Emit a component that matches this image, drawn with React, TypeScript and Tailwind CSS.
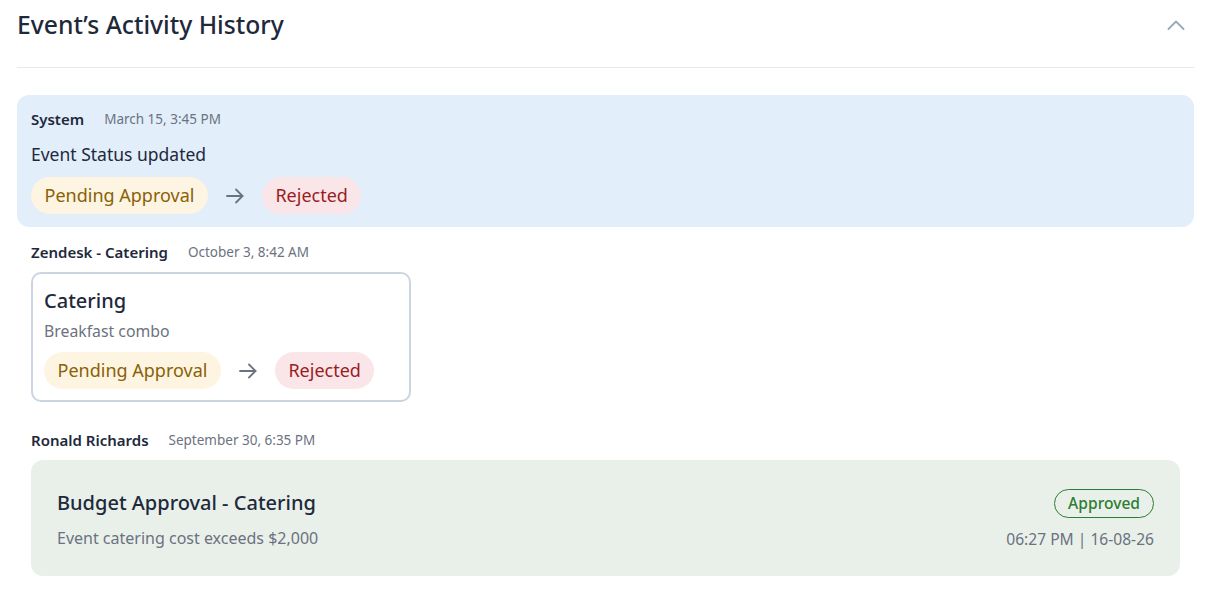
import React from 'react';

const Arrow = () => (
  <svg width="18" height="16" viewBox="0 0 18 16" fill="none" stroke="#6b7280" strokeWidth="1.8" strokeLinecap="round" strokeLinejoin="round">
    <line x1="1" y1="8" x2="16.5" y2="8" />
    <polyline points="10,1.5 16.5,8 10,14.5" />
  </svg>
);

const StatusChange = () => (
  <div className="flex items-center gap-[18px]">
    <span className="h-[37px] flex items-center px-[13.5px] rounded-full bg-[#fdf5e2] text-[#8a6106] text-[18px]">
      Pending Approval
    </span>
    <Arrow />
    <span className="h-[37px] flex items-center px-[13.5px] rounded-full bg-[#fae6e8] text-[#9b1c1f] text-[18px]">
      Rejected
    </span>
  </div>
);

const Meta = ({ who, when }: { who: string; when: string }) => (
  <div className="flex items-center gap-[20px] h-5">
    <span className="text-[15px] font-semibold text-[#1e293b]">{who}</span>
    <span className="text-[13.5px] text-[#6b7280]">{when}</span>
  </div>
);

export default function App() {
  return (
    <div className="w-full min-h-screen bg-white px-[17px] text-[#1e293b]" style={{ fontFamily: '"Noto Sans", "Open Sans", sans-serif' }}>
      <div className="flex items-center justify-between pt-[8px] pb-[25px]">
        <h1 className="text-[24.7px] leading-[34px] font-medium text-[#1e293b]">Event’s Activity History</h1>
        <button className="w-6 h-6 mr-[6px] flex items-center justify-center">
          <svg width="18" height="10" viewBox="0 0 18 10" fill="none" stroke="#9aa8bb" strokeWidth="1.8" strokeLinecap="round" strokeLinejoin="round">
            <polyline points="1.5,9 9,1.5 16.5,9" />
          </svg>
        </button>
      </div>
      <div className="h-px bg-[#e6e8ee]" />

      <div className="mt-[27px] rounded-[12px] bg-[#e3eefb] px-[14px] pt-[14px] pb-[13px]">
        <Meta who="System" when="March 15, 3:45 PM" />
        <p className="mt-[13px] text-[17.5px] leading-[24px] text-[#1e293b]">Event Status updated</p>
        <div className="mt-[11px]">
          <StatusChange />
        </div>
      </div>

      <div className="px-[14px] mt-[15px]">
        <Meta who="Zendesk - Catering" when="October 3, 8:42 AM" />
        <div className="mt-[10px] w-[380px] rounded-[10px] border-2 border-[#cbd5e1] px-[11px] pt-[13px] pb-[11px]">
          <p className="text-[20px] leading-[28px] font-medium text-[#1e293b]">Catering</p>
          <p className="mt-[5px] text-[15.8px] leading-[22px] text-[#6b7280]">Breakfast combo</p>
          <div className="mt-[10px]">
            <StatusChange />
          </div>
        </div>
      </div>

      <div className="px-[14px] mt-[28px]">
        <Meta who="Ronald Richards" when="September 30, 6:35 PM" />
        <div className="mt-[10px] rounded-[12px] bg-[#e9f0ea] px-[26px] pt-[29px] pb-[25px] flex justify-between">
          <div>
            <p className="text-[20px] leading-[28px] font-medium text-[#1e293b]">Budget Approval - Catering</p>
            <p className="mt-[9px] text-[16px] leading-[24px] text-[#6b7280]">Event catering cost exceeds $2,000</p>
          </div>
          <div className="flex flex-col items-end">
            <span className="h-[29px] flex items-center px-[13px] rounded-full border border-[#2e7d32] text-[#2e7d32] text-[15.6px] font-medium">
              Approved
            </span>
            <p className="mt-[9px] text-[15.6px] leading-[24px] text-[#6b7280]">06:27 PM | 16-08-26</p>
          </div>
        </div>
      </div>
    </div>
  );
}
